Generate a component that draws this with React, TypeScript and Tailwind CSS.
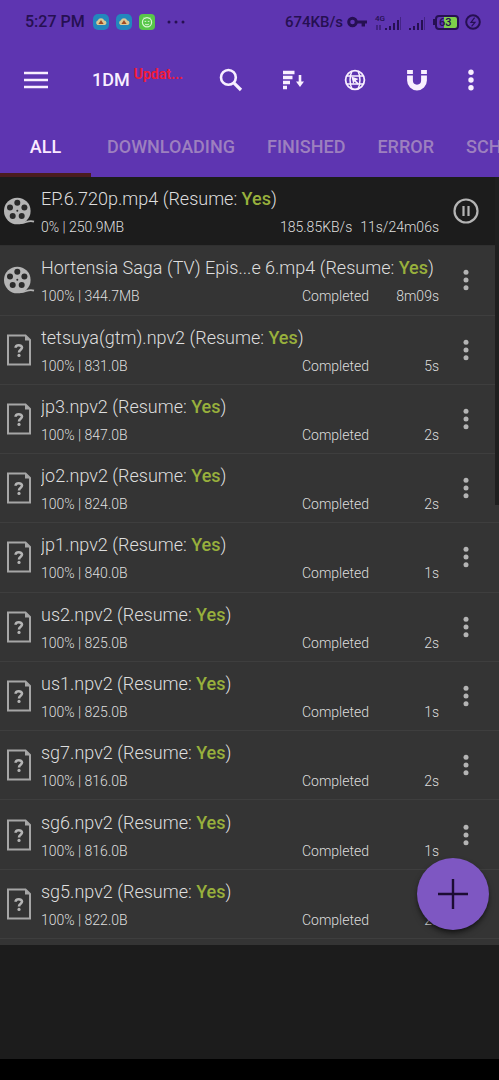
import type {ReactNode} from "react";

type Download = {
    name: string;
    progress: string;
    size: string;
    status: string;
    time: string;
    kind: "video" | "unknown";
    active?: boolean;
};

const TABS = ["ALL", "DOWNLOADING", "FINISHED", "ERROR", "SCHEDULED"];

const DOWNLOADS: Download[] = [
    {name: "EP.6.720p.mp4", progress: "0%", size: "250.9MB", status: "185.85KB/s", time: "11s/24m06s", kind: "video", active: true},
    {name: "Hortensia Saga (TV) Epis...e 6.mp4", progress: "100%", size: "344.7MB", status: "Completed", time: "8m09s", kind: "video"},
    {name: "tetsuya(gtm).npv2", progress: "100%", size: "831.0B", status: "Completed", time: "5s", kind: "unknown"},
    {name: "jp3.npv2", progress: "100%", size: "847.0B", status: "Completed", time: "2s", kind: "unknown"},
    {name: "jo2.npv2", progress: "100%", size: "824.0B", status: "Completed", time: "2s", kind: "unknown"},
    {name: "jp1.npv2", progress: "100%", size: "840.0B", status: "Completed", time: "1s", kind: "unknown"},
    {name: "us2.npv2", progress: "100%", size: "825.0B", status: "Completed", time: "2s", kind: "unknown"},
    {name: "us1.npv2", progress: "100%", size: "825.0B", status: "Completed", time: "1s", kind: "unknown"},
    {name: "sg7.npv2", progress: "100%", size: "816.0B", status: "Completed", time: "2s", kind: "unknown"},
    {name: "sg6.npv2", progress: "100%", size: "816.0B", status: "Completed", time: "1s", kind: "unknown"},
    {name: "sg5.npv2", progress: "100%", size: "822.0B", status: "Completed", time: "2s", kind: "unknown"},
];

const ReelIcon = () => (
    <svg width="35" height="30" viewBox="0 0 35 30" aria-hidden="true">
        <path d="M20 27.2C26 27.6 28 23.4 34 25.6" fill="none" stroke="#b4b4b4" strokeWidth="1.8"/>
        <circle cx="17.3" cy="15" r="13.3" fill="#b4b4b4"/>
        <g fill="#2b2b2b">
            <circle cx="17.3" cy="6.8" r="3"/>
            <circle cx="10" cy="11.4" r="3"/>
            <circle cx="24.4" cy="11.4" r="3"/>
            <circle cx="12.7" cy="20" r="3"/>
            <circle cx="21.7" cy="20" r="3"/>
            <circle cx="17.3" cy="14.8" r="1"/>
        </g>
    </svg>
);

const UnknownFileIcon = () => (
    <svg width="34" height="32" viewBox="0 0 34 32" aria-hidden="true">
        <path d="M8 1.5H25.5L30 6V30.5H8Z" fill="none" stroke="#a6a6a6" strokeWidth="2"/>
        <path d="M25 1V6.5H30.5Z" fill="#a6a6a6"/>
        <path d="M15.6 13.8C15.6 10.4 22 10.4 22 13.6C22 15.8 19 15.6 19 18.4" fill="none" stroke="#b4b4b4" strokeWidth="2.6"/>
        <circle cx="19" cy="21.4" r="1.6" fill="#b4b4b4"/>
    </svg>
);

const DotsIcon = ({size}: { size: "sm" | "lg" }) => (
    <svg width="8" height="24" viewBox="0 0 8 24" fill="currentColor" aria-hidden="true">
        <circle cx="4" cy="4.2" r={size === "lg" ? 2.7 : 2.5}/>
        <circle cx="4" cy="12" r={size === "lg" ? 2.7 : 2.5}/>
        <circle cx="4" cy="19.8" r={size === "lg" ? 2.7 : 2.5}/>
    </svg>
);

const PauseIcon = () => (
    <svg width="26" height="26" viewBox="0 0 26 26" fill="none" stroke="#b4b4b4" strokeWidth="2.2" aria-hidden="true">
        <circle cx="13" cy="13" r="11.5"/>
        <path d="M10.5 8V18M15.5 8V18"/>
    </svg>
);

const CloudBadge = () => (
    <svg width="16" height="16" viewBox="0 0 16 16" aria-hidden="true">
        <rect width="16" height="16" rx="5" fill="#2387bd"/>
        <path d="M4.5 11A2.4 2.4 0 0 1 4.7 6.6A3.6 3.6 0 0 1 11.3 6.4A2.4 2.4 0 0 1 12 11Z" fill="#d9c896"/>
        <path d="M8 6L10.6 10H5.4Z" fill="#a04a22"/>
    </svg>
);

const GreenBadge = () => (
    <svg width="16" height="16" viewBox="0 0 16 16" fill="none" aria-hidden="true">
        <rect width="16" height="16" rx="4" fill="#58c74a"/>
        <circle cx="8" cy="8.2" r="4.6" stroke="#d8f6d2" strokeWidth="1.2"/>
        <path d="M5 3.6L6.4 5M11 3.6L9.6 5M5.6 7.4H7.2M8.8 7.4H10.4M6 10C7 11 9 11 10 10" stroke="#d8f6d2"/>
    </svg>
);

const SignalIcon = () => (
    <svg width="16" height="13" viewBox="0 0 16 13" fill="currentColor" aria-hidden="true">
        <rect x="0" y="11" width="2" height="2"/>
        <rect x="4" y="9" width="2" height="4"/>
        <rect x="8" y="6" width="2" height="7"/>
        <rect x="12" y="3" width="2" height="10"/>
        <rect x="15" y="0" width="1" height="13" opacity=".45"/>
    </svg>
);

const StatusBar = () => (
    <div className="flex h-11 items-center pl-[25px] pr-[18px] text-base font-medium text-[#261052]">
        <span>5:27 PM</span>
        <div className="ml-2 flex items-center gap-[7px]">
            <CloudBadge/>
            <CloudBadge/>
            <GreenBadge/>
        </div>
        <svg className="ml-3" width="18" height="4" viewBox="0 0 18 4" fill="currentColor" aria-hidden="true">
            <circle cx="2" cy="2" r="1.5"/>
            <circle cx="9" cy="2" r="1.5"/>
            <circle cx="16" cy="2" r="1.5"/>
        </svg>
        <span className="ml-auto text-[15px]">674KB/s</span>
        <svg className="ml-1" width="20" height="12" viewBox="0 0 20 12" aria-hidden="true">
            <circle cx="5.5" cy="6" r="3.8" fill="none" stroke="currentColor" strokeWidth="3"/>
            <path d="M9 4.4H20V7.6H18V10.4H14.6V7.6H9Z" fill="currentColor"/>
        </svg>
        <div className="ml-2 flex items-end">
            <div className="flex flex-col text-[8px] leading-[8px]">
                <span>4G</span>
                <svg className="mt-0.5" width="8" height="5" viewBox="0 0 8 5" stroke="currentColor" aria-hidden="true">
                    <path d="M2 0V5M5 0V5"/>
                </svg>
            </div>
            <SignalIcon/>
            <div className="ml-2">
                <SignalIcon/>
            </div>
        </div>
        <div className="ml-2 flex items-center">
            <span className="h-1.5 w-0.5 bg-[#261052]"/>
            <span className="flex h-[15px] w-6 items-center rounded border-2 border-[#261052] bg-linear-to-r from-transparent from-35% to-[#7fd04a] to-35% pl-0.5 text-[11px] leading-none">63</span>
        </div>
        <svg className="ml-1.5" width="16" height="16" viewBox="0 0 16 16" fill="none" stroke="currentColor" aria-hidden="true">
            <circle cx="8" cy="8" r="6.8" strokeWidth="2"/>
            <path d="M9.6 3.6L6 8.4H10L6.6 12.4" strokeWidth="1.2"/>
        </svg>
    </div>
);

const ToolButton = ({label, children}: { label: string, children: ReactNode }) => (
    <button type="button" aria-label={label} className="flex size-12 items-center justify-center">
        {children}
    </button>
);

const Toolbar = () => (
    <div className="flex h-[72px] items-center px-3 text-[#f8efff]">
        <ToolButton label="Menu">
            <svg width="24" height="18" viewBox="0 0 24 18" stroke="currentColor" strokeWidth="2.6" aria-hidden="true">
                <path d="M0 2H24M0 9H24M0 16H24"/>
            </svg>
        </ToolButton>
        <div className="ml-8 flex items-start">
            <h1 className="text-lg font-medium leading-6">1DM</h1>
            <span className="ml-1 text-sm font-bold leading-3 text-[#ef1b3a]">Updat...</span>
        </div>
        <div className="ml-auto flex items-center gap-3.5">
            <ToolButton label="Search">
                <svg width="24" height="24" viewBox="0 0 24 24" fill="none" stroke="currentColor" aria-hidden="true">
                    <circle cx="9.4" cy="9.4" r="7.4" strokeWidth="2.6"/>
                    <path d="M14.6 14.6L22 22" strokeWidth="3.2"/>
                </svg>
            </ToolButton>
            <ToolButton label="Sort">
                <svg width="22" height="20" viewBox="0 0 22 20" fill="none" stroke="currentColor" aria-hidden="true">
                    <path d="M1 2.5H12.5M1 7.5H10.5M1 12.5H8M1 17.5H5" strokeWidth="3.6"/>
                    <path d="M18 5V13" strokeWidth="2.6"/>
                    <path d="M14 11.6H22L18 17Z" fill="currentColor" stroke="none"/>
                </svg>
            </ToolButton>
            <ToolButton label="Browser">
                <svg width="22" height="22" viewBox="0 0 22 22" fill="none" stroke="currentColor" strokeWidth="1.8" aria-hidden="true">
                    <circle cx="11" cy="11" r="9.4"/>
                    <path d="M8 2.2C5.4 7 5.4 15 8 19.8M14 2.2C16.6 7 16.6 15 14 19.8M2.6 7H19.4M2.6 15H19.4" strokeWidth="1.5"/>
                    <path d="M7.4 7.4L14.6 10L11.8 11.4L14.8 14.6L13.6 15.8L10.6 12.6L9.2 15Z" fill="currentColor" stroke="none"/>
                </svg>
            </ToolButton>
            <ToolButton label="Add magnet">
                <svg width="20" height="21" viewBox="0 0 20 21" aria-hidden="true">
                    <path d="M3 5.4V10.6A7 7 0 0 0 17 10.6V5.4" fill="none" stroke="currentColor" strokeWidth="5.8"/>
                    <path d="M.1 0H5.9V4H.1ZM14.1 0H19.9V4H14.1Z" fill="currentColor"/>
                </svg>
            </ToolButton>
            <button type="button" aria-label="More options" className="flex h-12 w-8 items-center justify-center">
                <DotsIcon size="lg"/>
            </button>
        </div>
    </div>
);

const TabBar = () => (
    <div role="tablist" className="flex h-[61px] overflow-hidden whitespace-nowrap text-lg font-medium">
        {TABS.map((tab, i) => (
            <button
                key={tab}
                type="button"
                role="tab"
                aria-selected={i === 0}
                className={i === 0
                    ? "w-[91px] shrink-0 border-b-4 border-[#4a1c1e] pt-1 text-[#fbeaff]"
                    : "shrink-0 border-b-4 border-transparent px-4 pt-1 text-[#9d80bf]"}
            >
                {tab}
            </button>
        ))}
    </div>
);

const DownloadRow = ({item}: { item: Download }) => (
    <li className={`flex min-h-[69px] items-center border-b font-light text-[#dedede] ${item.active ? "border-[#303030] bg-[#1c1c1c]" : "border-[#3e3e3e]"}`}>
        <div className="w-[41px] shrink-0">
            {item.kind === "video" ? <ReelIcon/> : <UnknownFileIcon/>}
        </div>
        <div className="min-w-0 flex-1">
            <p className="truncate text-lg leading-8">
                {item.name} (Resume: <span className="font-medium text-[#98b03c]">Yes</span>)
            </p>
            <div className="flex text-sm leading-6">
                <span className="flex-1">{item.progress} | {item.size}</span>
                <span>{item.status}</span>
                <span className="min-w-[70px] pl-2 text-right">{item.time}</span>
            </div>
        </div>
        <button
            type="button"
            aria-label={item.active ? "Pause" : "Options"}
            className="flex w-[60px] shrink-0 items-center justify-center self-stretch pr-1.5 text-[#b4b4b4]"
        >
            {item.active ? <PauseIcon/> : <DotsIcon size="sm"/>}
        </button>
    </li>
);

export default function App() {
    return (
        <div className="relative flex min-h-screen flex-col bg-[#1c1c1c] font-[Roboto,sans-serif]">
            <header className="bg-[#5e35b1]">
                <StatusBar/>
                <Toolbar/>
                <TabBar/>
            </header>
            <main className="relative flex-1">
                <ul className="grid min-h-[768px] auto-rows-fr bg-[#343434] pb-1.5">
                    {DOWNLOADS.map((item) => <DownloadRow key={item.name} item={item}/>)}
                </ul>
                <div className="absolute right-0 top-0 h-[328px] w-1 bg-[#1f1f1f]"/>
            </main>
            <footer className="h-[21px] bg-black"/>
            <button
                type="button"
                aria-label="Add download"
                className="absolute bottom-[150px] right-2.5 flex size-[72px] items-center justify-center rounded-full bg-[#7e57c2] shadow-md shadow-black/50"
            >
                <svg width="32" height="32" viewBox="0 0 32 32" stroke="#1c0c33" strokeWidth="2.4" aria-hidden="true">
                    <path d="M16 1V31M1 16H31"/>
                </svg>
            </button>
        </div>
    );
}
